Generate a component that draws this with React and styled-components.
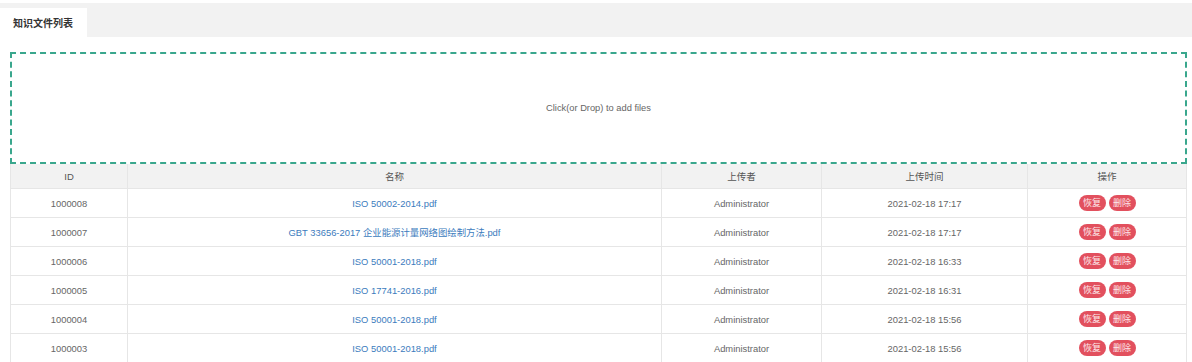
import React from 'react';
import styled, { createGlobalStyle } from 'styled-components';

const GlobalStyle = createGlobalStyle`
  html, body {
    margin: 0;
    padding: 0;
    background: #fff;
    font-family: "Liberation Sans", "Noto Sans CJK SC", sans-serif;
  }
`;

const files = [
  { id: '1000008', name: 'ISO 50002-2014.pdf', user: 'Administrator', time: '2021-02-18 17:17' },
  { id: '1000007', name: 'GBT 33656-2017 企业能源计量网络图绘制方法.pdf', user: 'Administrator', time: '2021-02-18 17:17' },
  { id: '1000006', name: 'ISO 50001-2018.pdf', user: 'Administrator', time: '2021-02-18 16:33' },
  { id: '1000005', name: 'ISO 17741-2016.pdf', user: 'Administrator', time: '2021-02-18 16:31' },
  { id: '1000004', name: 'ISO 50001-2018.pdf', user: 'Administrator', time: '2021-02-18 15:56' },
  { id: '1000003', name: 'ISO 50001-2018.pdf', user: 'Administrator', time: '2021-02-18 15:56' },
];

const App = () => {
  return (
    <Page>
      <GlobalStyle />
      <TabBar>
        <Tab>知识文件列表</Tab>
      </TabBar>
      <Content>
        <DropZone>Click(or Drop) to add files</DropZone>
        <Table>
          <colgroup>
            <col style={{ width: 117 }} />
            <col style={{ width: 534 }} />
            <col style={{ width: 160 }} />
            <col style={{ width: 206 }} />
            <col style={{ width: 159 }} />
          </colgroup>
          <thead>
            <tr>
              <Th>ID</Th>
              <Th>名称</Th>
              <Th>上传者</Th>
              <Th>上传时间</Th>
              <Th>操作</Th>
            </tr>
          </thead>
          <tbody>
            {files.map((f) => (
              <tr key={f.id}>
                <Td>{f.id}</Td>
                <Td><FileLink>{f.name}</FileLink></Td>
                <Td>{f.user}</Td>
                <Td>{f.time}</Td>
                <Td>
                  <Actions>
                    <PillButton>恢复</PillButton>
                    <PillButton>删除</PillButton>
                  </Actions>
                </Td>
              </tr>
            ))}
          </tbody>
        </Table>
      </Content>
    </Page>
  );
};

export default App;

const Page = styled.div`
  padding-top: 3px;
  width: 1192px;
`;

const TabBar = styled.div`
  height: 34px;
  background: #f2f2f2;
  display: flex;
  align-items: flex-end;
`;

const Tab = styled.div`
  height: 29px;
  background: #fff;
  padding: 0 14px 0 13px;
  display: flex;
  align-items: center;
  font-size: 10px;
  font-weight: bold;
  color: #333;
`;

const Content = styled.div`
  padding: 15px 5px 0 10px;
`;

const DropZone = styled.div`
  height: 108px;
  border: 2px dashed #3aa78d;
  display: flex;
  align-items: center;
  justify-content: center;
  font-size: 9.3px;
  color: #666;
`;

const Table = styled.table`
  width: 1176px;
  border-collapse: collapse;
  table-layout: fixed;
`;

const Th = styled.th`
  height: 24px;
  padding: 0;
  background: #f2f2f2;
  border: 1px solid #e6e6e6;
  border-top: none;
  font-size: 9.5px;
  font-weight: normal;
  color: #555;
  text-align: center;
`;

const Td = styled.td`
  height: 28px;
  padding: 0;
  border: 1px solid #e6e6e6;
  font-size: 9.4px;
  color: #666;
  text-align: center;
`;

const FileLink = styled.a`
  color: #3b7bbd;
  text-decoration: none;
  cursor: pointer;
`;

const Actions = styled.div`
  display: flex;
  justify-content: center;
  gap: 3px;
`;

const PillButton = styled.button`
  width: 27px;
  height: 16px;
  padding: 0;
  border: none;
  border-radius: 8px;
  background: #e2505e;
  color: #fde8ea;
  font-family: "Liberation Sans", "Noto Sans CJK SC", sans-serif;
  font-size: 9px;
  line-height: 16px;
  cursor: pointer;
`;
